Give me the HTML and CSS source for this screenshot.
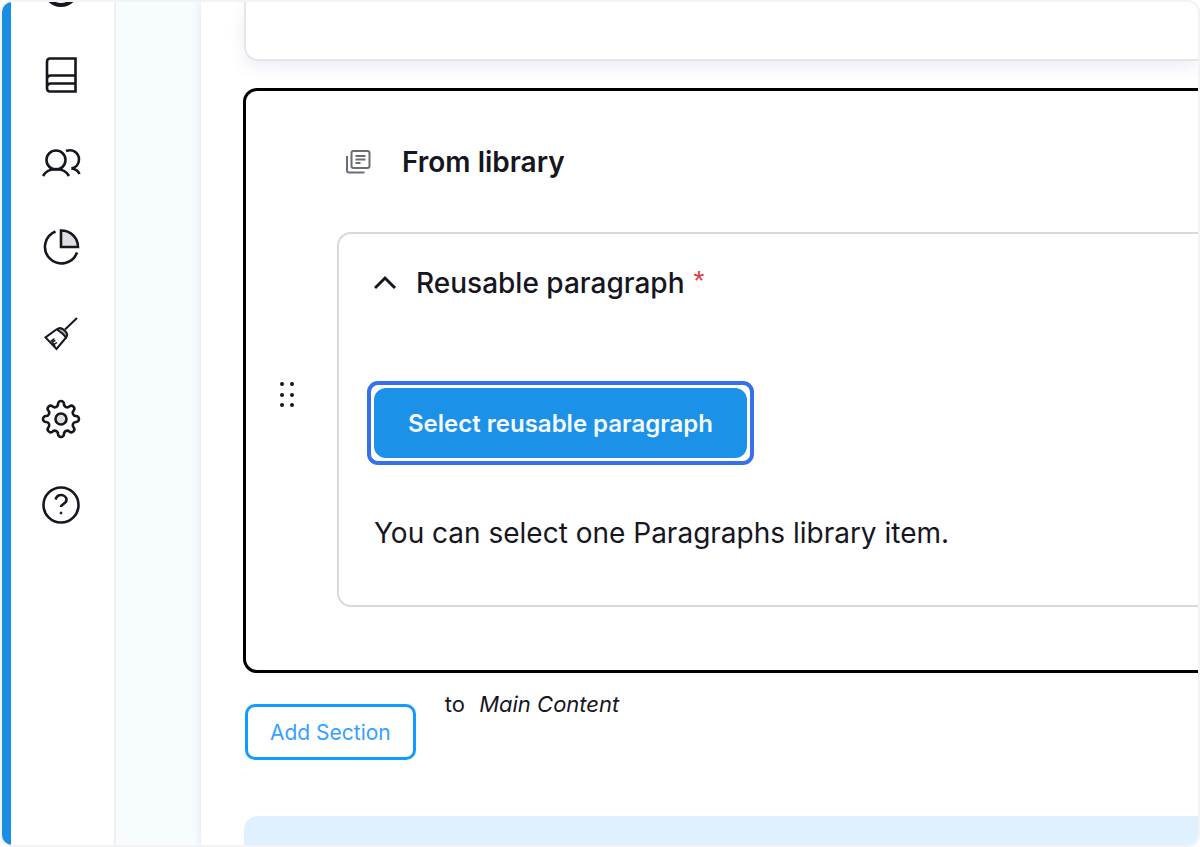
FILE: index.html
```html
<!DOCTYPE html>
<html lang="en">
<head>
    <meta charset="UTF-8">
    <meta name="viewport" content="width=device-width, initial-scale=1.0">
    <title>Edit content</title>
    <link rel="stylesheet" href="styles.css">
</head>
<body>
    <div class="frame">
        <nav class="sidebar" aria-label="Administration">
            <a href="#" aria-label="Extend">
                <svg viewBox="0 0 40 40"><circle cx="20" cy="20" r="16" stroke-width="4"/></svg>
            </a>
            <a href="#" aria-label="Content">
                <svg viewBox="0 0 40 40"><path d="M9 3.500h25.500v33H9q-3 0-3-3.500V7q0-3.500 3-3.500zM6 24.500q0-4 4-4h24.500M6 32.500q0-4 4-4h24.500"/></svg>
            </a>
            <a href="#" aria-label="People">
                <svg viewBox="0 0 40 40"><circle cx="15" cy="19" r="9.500"/><path d="M2 35q4-7 13-7t13 7M25 10c7-2.500 13 2 13 8.500 0 4.500-3 8-7.500 9 4 .5 6.500 2 8 5.500"/></svg>
            </a>
            <a href="#" aria-label="Reports">
                <svg viewBox="0 0 40 40"><path d="M20 3.500V20h17C37 10.500 29.500 3.500 20 3.500z" fill="#dedee2"/><path d="M14.500 4.500a16.500 16.500 0 1 0 21.500 21"/></svg>
            </a>
            <a href="#" aria-label="Appearance">
                <svg viewBox="0 0 40 40" class="thin"><path d="M36 5 24 16.500"/><path d="M16 16.500q3-3 7 .5l1.500 1.500q3 3 .5 6L22 21z" fill="#b9b9bf"/><path d="M16 16 4.500 24.500 15.500 36l10-12"/><path d="M9.500 28.500l4-3M12.500 31.500l-1-3 3-1M14 33.500l-1-2 3-2" stroke-width="1.500"/></svg>
            </a>
            <a href="#" aria-label="Configuration">
                <svg viewBox="0 0 40 40"><path d="M17 5a3 3 0 0 1 6 0A3.200 3.200 0 0 0 28.500 7.300a3 3 0 0 1 4.200 4.200A3.200 3.200 0 0 0 35 17a3 3 0 0 1 0 6A3.200 3.200 0 0 0 32.700 28.500a3 3 0 0 1-4.200 4.200A3.200 3.200 0 0 0 23 35a3 3 0 0 1-6 0A3.200 3.200 0 0 0 11.500 32.700a3 3 0 0 1-4.200-4.200A3.200 3.200 0 0 0 5 23a3 3 0 0 1 0-6A3.200 3.200 0 0 0 7.300 11.500a3 3 0 0 1 4.200-4.200A3.200 3.200 0 0 0 17 5z"/><circle cx="20" cy="20" r="5.500" fill="#dedee2"/></svg>
            </a>
            <a href="#" aria-label="Help">
                <svg viewBox="0 0 40 40"><circle cx="20" cy="20" r="17.500"/><path d="M14.500 14.500c1-3 3-4.500 5.500-4.500 3 0 5.500 2 5.500 5 0 4-5.500 3.500-5.500 7"/><circle cx="20" cy="28" r="1" fill="#16161f" stroke-width="1"/></svg>
            </a>
        </nav>

        <main class="content">
            <section class="card previous"></section>

            <section class="card library">
                <button class="drag" type="button" aria-label="Drag to reorder">
                    <svg viewBox="0 0 18 28"><circle cx="4" cy="3" r="2"/><circle cx="14" cy="3" r="2"/><circle cx="4" cy="14" r="2"/><circle cx="14" cy="14" r="2"/><circle cx="4" cy="24" r="2"/><circle cx="14" cy="24" r="2"/></svg>
                </button>
                <div class="library-body">
                    <h2>
                        <svg viewBox="0 0 26 26"><rect x="6.500" y="2" width="18" height="17" rx="2"/><path d="M2 7v14.500q0 2 2 2h15.500M10.500 7h10M10.500 10.500h10M10.500 14h5"/></svg>
                        From library
                    </h2>
                    <details class="field" open>
                        <summary>
                            <svg viewBox="0 0 24 24"><path d="M1 17 11 7l10 10"/></svg>
                            <span>Reusable paragraph</span>
                            <span class="required">*</span>
                        </summary>
                        <button class="select-button" type="button">Select reusable paragraph</button>
                        <p>You can select one Paragraphs library item.</p>
                    </details>
                </div>
            </section>

            <div class="actions">
                <button class="add-button" type="button">Add Section</button>
                <span class="target">to <em>Main Content</em></span>
            </div>

            <section class="panel"></section>
        </main>
    </div>
</body>
</html>
```

FILE: styles.css
```css
* {
    box-sizing: border-box;
}
body {
    margin: 0;
    background: #fff;
    color: #16161f;
    font-family: Inter, sans-serif;
}
button {
    font-family: inherit;
    cursor: pointer;
}
svg {
    display: block;
    fill: none;
    stroke: #16161f;
}
.frame {
    display: flex;
    min-height: 100vh;
    border: 2px solid #f3f3f5;
    border-radius: 12px;
    overflow: hidden;
    background: #f7fcff;
}
.sidebar {
    display: flex;
    flex-direction: column;
    align-items: center;
    gap: 46px;
    flex: none;
    width: 114px;
    padding-right: 3px;
    border-left: 9px solid #1a8ee3;
    border-right: 2px solid #eeeff0;
    background: #fff;
}
.sidebar a:first-child {
    margin-top: -33px;
}
.sidebar svg {
    width: 40px;
    height: 40px;
    stroke-width: 2.6;
}
.sidebar .thin {
    stroke-width: 2;
}
.content {
    display: flex;
    flex-direction: column;
    flex: 1;
    min-width: 0;
    margin-left: 85px;
    padding-left: 42px;
    background: #fff;
    box-shadow: 0 0 8px rgba(60, 80, 110, 0.15);
}
.previous {
    min-height: 59px;
    margin-left: 1px;
    border: 2px solid #e6e6e8;
    border-top: 0;
    border-right: 0;
    border-radius: 0 0 0 14px;
    box-shadow: 0 6px 16px rgba(80, 90, 160, 0.1);
}
.library {
    display: flex;
    margin-top: 27px;
    padding: 55px 0 63px 32px;
    border: 3px solid #000;
    border-right: 0;
    border-radius: 14px 0 0 14px;
    background: #fff;
    position: relative;
}
.drag {
    align-self: center;
    padding: 0;
    border: 0;
    background: none;
    margin-top: 36px;
}
.drag svg {
    width: 18px;
    height: 28px;
    fill: #16161f;
    stroke: none;
}
.library-body {
    flex: 1;
    margin-left: 41px;
}
h2 {
    display: flex;
    align-items: center;
    gap: 31px;
    margin: 0 0 54px;
    padding-left: 8px;
    font-size: 28px;
    line-height: 32px;
    font-weight: 600;
}
h2 svg {
    width: 26px;
    height: 26px;
    stroke: #6a6d75;
    stroke-width: 2;
}
.field {
    padding: 33px 34px 56px 35px;
    border: 2px solid #d9d9dd;
    border-right: 0;
    border-radius: 14px 0 0 14px;
}
summary {
    display: flex;
    align-items: center;
    list-style: none;
    font-size: 28px;
    line-height: 32px;
    font-weight: 500;
    cursor: pointer;
}
summary svg {
    width: 24px;
    height: 24px;
    margin-right: 18px;
    stroke-width: 3;
}
.required {
    margin-left: 9px;
    color: #dc3b3b;
    font-family: "Liberation Sans", sans-serif;
    line-height: 28px;
    font-weight: 400;
    align-self: flex-start;
}
.select-button {
    display: block;
    position: relative;
    height: 70px;
    margin-top: 89px;
    padding: 0 34px;
    border: 0;
    border-radius: 12px;
    background: #1b91e8;
    color: #f4faff;
    font-size: 24px;
    font-weight: 600;
}
/* focus ring */
.select-button::after {
    content: "";
    position: absolute;
    inset: -7px;
    border: 4px solid #3671e9;
    border-radius: 11px;
}
.field p {
    margin: 59px 0 0;
    font-size: 28px;
    line-height: 32px;
}
.actions {
    display: flex;
    align-items: flex-start;
    gap: 29px;
    margin: 31px 0 56px 2px;
}
.add-button {
    height: 56px;
    padding: 0 22px;
    border: 3px solid #109bff;
    border-radius: 10px;
    background: #fff;
    color: #369fff;
    font-size: 21px;
}
.target {
    margin-top: -14px;
    font-size: 22px;
    line-height: 28px;
}
.target em {
    margin-left: 8px;
}
.panel {
    flex: 1;
    min-height: 29px;
    margin-left: 1px;
    border-top-left-radius: 14px;
    background: #dff1ff;
}
```
